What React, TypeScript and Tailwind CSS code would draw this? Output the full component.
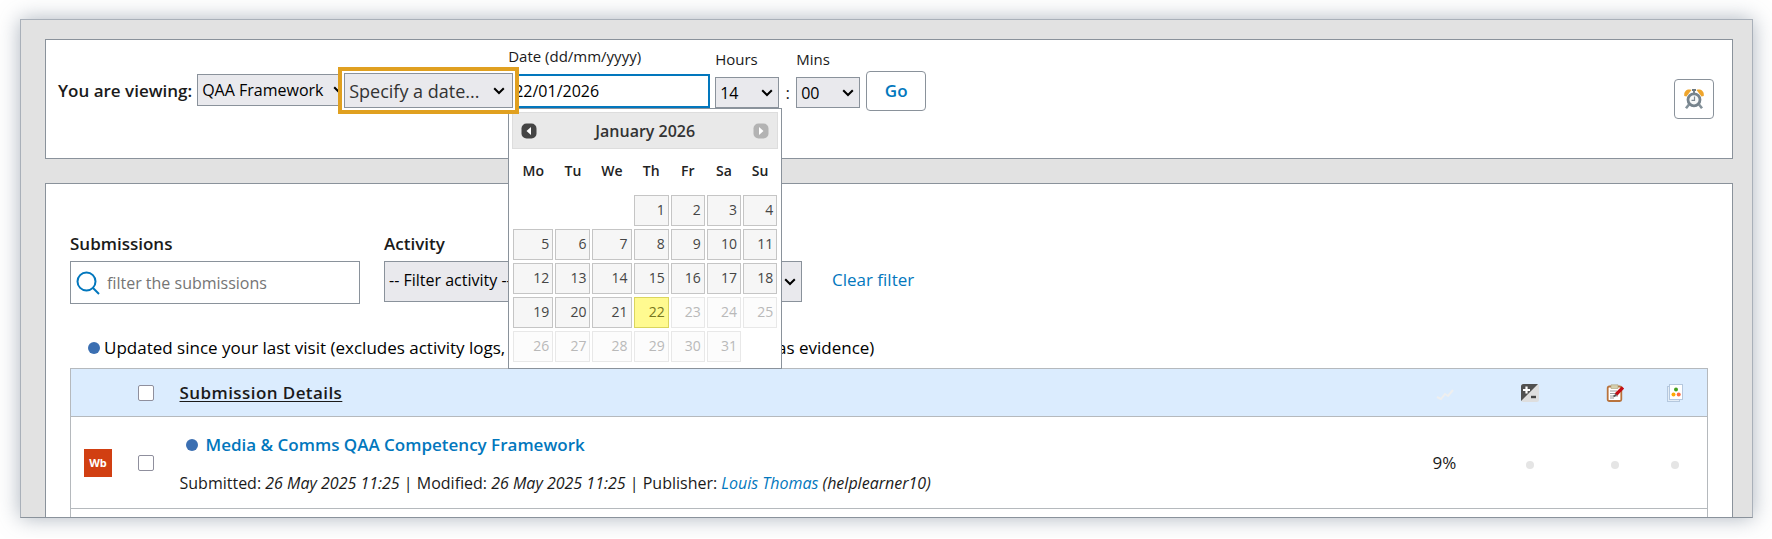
import { useState } from "react";
import type { ReactNode, SelectHTMLAttributes } from "react";

const days = ["Mo", "Tu", "We", "Th", "Fr", "Sa", "Su"];

const weeks = [
  [0, 0, 0, 1, 2, 3, 4],
  [5, 6, 7, 8, 9, 10, 11],
  [12, 13, 14, 15, 16, 17, 18],
  [19, 20, 21, 22, 23, 24, 25],
  [26, 27, 28, 29, 30, 31, 0],
];

const today = 22;

interface DropdownProps extends SelectHTMLAttributes<HTMLSelectElement> {
  wrapper?: string;
  chevron?: string;
  children: ReactNode;
}

function Dropdown({ wrapper = "", chevron = "right-1.5 w-3", className = "", children, ...rest }: DropdownProps) {
  return (
    <div className={`relative text-black ${wrapper}`}>
      <select
        className={`block w-full appearance-none border border-[#8a929b] bg-[#e9e9ed] pl-1 outline-none ${className}`}
        {...rest}
      >
        {children}
      </select>
      <svg
        viewBox="0 0 12 8"
        fill="none"
        stroke="currentColor"
        strokeWidth="2"
        className={`pointer-events-none absolute top-1/2 -translate-y-1/2 ${chevron}`}
      >
        <path d="M1.2 1.2 6 6l4.8-4.8" />
      </svg>
    </div>
  );
}

function ClockIcon() {
  return (
    <svg viewBox="0 0 20 20" className="h-5 w-5">
      <path d="M5 15.500 2 19.200M15 15.500 18 19.200" stroke="#84919a" strokeWidth="2.600" />
      <path d="M.3 7C-.5 2.500 3 -.5 7.500 1L2.500 7.500Z" fill="#efa52c" />
      <path d="M19.700 7C20.500 2.500 17 -.5 12.500 1L17.500 7.500Z" fill="#efa52c" />
      <path d="M8 1h4M10 1v3" stroke="#6c7982" strokeWidth="1.800" />
      <circle cx="10" cy="10.800" r="6" fill="#f7f8f8" stroke="#76838c" strokeWidth="2.800" />
      <path d="M10.500 7.500V11.300H7.500" stroke="#7d8991" strokeWidth="1.200" fill="none" />
    </svg>
  );
}

function Calendar() {
  return (
    <div className="absolute top-full left-0 z-20 w-[274px] border border-[#8a929b] bg-white px-[3px] pt-[3px] pb-[5px]">
      <div className="flex h-[37px] items-center justify-between border border-[#ddd] bg-[#e9e9e9] px-2 text-base text-[#333]">
        <button type="button" aria-label="Previous month">
          <svg viewBox="0 0 16 16" className="h-4 w-4">
            <rect x=".5" y=".5" width="15" height="15" rx="5" fill="#444" />
            <path d="M10 4v8L5.500 8Z" fill="#fff" />
          </svg>
        </button>
        <span className="font-semibold">January 2026</span>
        <button type="button" aria-label="Next month" disabled>
          <svg viewBox="0 0 16 16" className="h-4 w-4">
            <rect x=".5" y=".5" width="15" height="15" rx="5" fill="#b3b3b3" />
            <path d="M6 4v8L10.500 8Z" fill="#fff" />
          </svg>
        </button>
      </div>
      <table className="w-full table-fixed border-collapse text-sm">
        <colgroup>
          <col className="w-[42px]" />
          <col className="w-[37px]" />
          <col className="w-[41px]" />
          <col className="w-[37px]" />
          <col className="w-9" />
          <col className="w-9" />
          <col className="w-9" />
        </colgroup>
        <thead>
          <tr className="h-11">
            {days.map((day) => (
              <th key={day} className="p-0 font-semibold text-[#222]">
                {day}
              </th>
            ))}
          </tr>
        </thead>
        <tbody>
          {weeks.map((week, i) => (
            <tr key={i} className="h-[34px]">
              {week.map((day, j) => (
                <td key={j} className="px-px py-0">
                  {day > 0 && (
                    <button
                      type="button"
                      disabled={day > today}
                      className={`block h-[31px] w-full border pr-[3px] text-right ${
                        day === today
                          ? "border-[#dad55e] bg-[#fffa90] text-[#777620]"
                          : day > today
                            ? "border-[#e8e8e8] bg-[#fcfcfc] text-[#b9b9b9]"
                            : "border-[#c5c5c5] bg-[#f6f6f6] text-[#454545]"
                      }`}
                    >
                      {day}
                    </button>
                  )}
                </td>
              ))}
            </tr>
          ))}
        </tbody>
      </table>
    </div>
  );
}

function ViewingBar() {
  const [date, setDate] = useState("22/01/2026");

  return (
    <section className="flex items-end justify-between border border-[#8a929b] bg-white pt-1.5 pr-[18px] pb-[39px] pl-3">
      <div className="flex items-end pb-2">
        <label htmlFor="framework" className="mr-[5px] pb-2 font-semibold">
          You are viewing:
        </label>
        <Dropdown id="framework" wrapper="mb-[5px] w-[154px]" className="h-8 text-base">
          <option>QAA Framework</option>
        </Dropdown>
        <div className="relative z-30 -mb-[3px] -ml-[13px] w-[181px] border-4 border-[#e0a020] bg-white p-0.5">
          <Dropdown
            aria-label="Date range"
            className="h-[35px] text-lg text-[#333]"
            chevron="right-2 w-3"
          >
            <option>Specify a date...</option>
          </Dropdown>
        </div>
        <div className="relative -ml-[11px] pb-[3px]">
          <label htmlFor="date" className="mb-2 block text-[15px] leading-5">
            Date (dd/mm/yyyy)
          </label>
          <div className="relative">
            <input
              id="date"
              type="text"
              value={date}
              onChange={(e) => setDate(e.target.value)}
              className="block h-[34px] w-[202px] border-2 border-[#0277bd] px-1 text-base text-black outline-none"
            />
            <Calendar />
          </div>
        </div>
        <div className="ml-[5px] pb-[3px]">
          <label htmlFor="hours" className="mb-2 block text-[15px] leading-5">
            Hours
          </label>
          <Dropdown id="hours" wrapper="w-16" className="h-[31px] text-base">
            <option>14</option>
          </Dropdown>
        </div>
        <span className="w-[17px] pb-1.5 text-center">:</span>
        <div className="pb-[3px]">
          <label htmlFor="mins" className="mb-2 block text-[15px] leading-5">
            Mins
          </label>
          <Dropdown id="mins" wrapper="w-16" className="h-[31px] text-base">
            <option>00</option>
          </Dropdown>
        </div>
        <button
          type="button"
          className="ml-1.5 h-10 w-[60px] rounded border border-[#8a929b] font-semibold text-[#0277bd]"
        >
          Go
        </button>
      </div>
      <button
        type="button"
        aria-label="Reminders"
        className="flex h-10 w-10 items-center justify-center rounded border border-[#8a929b]"
      >
        <ClockIcon />
      </button>
    </section>
  );
}

function Filters() {
  return (
    <div className="flex items-start">
      <div className="w-[290px]">
        <label htmlFor="submissions" className="mb-[5px] block font-semibold">
          Submissions
        </label>
        <div className="relative">
          <svg
            viewBox="0 0 24 24"
            fill="none"
            stroke="#0277bd"
            strokeWidth="2"
            className="absolute top-2.5 left-1.5 h-6 w-6"
          >
            <circle cx="10.500" cy="10.500" r="9" />
            <path d="m17 17 6 6" />
          </svg>
          <input
            id="submissions"
            type="text"
            placeholder="filter the submissions"
            className="block h-[43px] w-full border border-[#8a929b] pl-9 text-base placeholder:text-[#757575] outline-none"
          />
        </div>
      </div>
      <div className="ml-6 w-[418px]">
        <label htmlFor="activity" className="mb-[5px] block font-semibold">
          Activity
        </label>
        <Dropdown id="activity" className="h-[41px] pb-1 text-base">
          <option>-- Filter activity --</option>
        </Dropdown>
      </div>
      <a href="#" className="ml-[30px] pt-9 text-[#0277bd]">
        Clear filter
      </a>
    </div>
  );
}

function GradeIcon() {
  return (
    <svg viewBox="0 0 18 18" className="mx-auto h-[18px] w-[18px]">
      <rect width="18" height="18" rx="2.500" fill="#dedede" />
      <path d="M2.500 0H17L0 17V2.500A2.500 2.500 0 0 1 2.500 0Z" fill="#505050" />
      <path d="M5.500 2.500v7M2 6h7" stroke="#fff" strokeWidth="2.200" />
      <path d="M10 13h5" stroke="#444" strokeWidth="2.400" />
    </svg>
  );
}

function FeedbackIcon() {
  return (
    <svg viewBox="0 0 18 18" className="mx-auto h-[18px] w-[18px]">
      <rect x="1.700" y="2.500" width="13.600" height="14.500" rx="1.500" fill="#fff" stroke="#b8733d" strokeWidth="1.800" />
      <path d="M5 .8h7v3.700H5Z" fill="#d5d0ae" stroke="#a79f78" strokeWidth=".6" />
      <path d="M4 7h7M4 9.500h6M4 12h8M4 14h4" stroke="#9a9a9a" strokeWidth="1" />
      <path d="m10 10.500 7-7" stroke="#c40d14" strokeWidth="3.200" />
      <path d="m7.500 12.500 3-2" stroke="#555" strokeWidth="1.600" />
    </svg>
  );
}

function CardsIcon() {
  return (
    <svg viewBox="0 0 18 18" className="mx-auto h-[18px] w-[18px]">
      <rect x="1.500" y="2.500" width="12" height="15" fill="#e4edf6" stroke="#b5c8de" />
      <rect x="3.500" y=".5" width="13" height="15" fill="#fff" stroke="#b5c8de" />
      <circle cx="10" cy="5.500" r="2" fill="#43a01f" />
      <circle cx="7.500" cy="10.500" r="2" fill="#ffa800" />
      <circle cx="12.700" cy="10.500" r="2" fill="#ff6c3f" />
    </svg>
  );
}

function Dot() {
  return <span className="inline-block h-3 w-3 rounded-full bg-[#3b6fb2]" />;
}

function EmptyDot() {
  return <span className="mx-auto mt-1 block h-2 w-2 rounded-full bg-[#e5e5e5]" />;
}

function SubmissionsTable() {
  return (
    <table className="w-full table-fixed border-collapse border-x border-[#b5b9bd]">
      <colgroup>
        <col className="w-[58px]" />
        <col className="w-[34px]" />
        <col />
        <col className="w-[58px]" />
        <col className="w-28" />
        <col className="w-[58px]" />
        <col className="w-16" />
      </colgroup>
      <thead>
        <tr className="h-12 border-y border-[#b5b9bd] bg-[#dbecfe]">
          <th />
          <th className="p-0">
            <input
              type="checkbox"
              aria-label="Select all"
              className="mx-auto block h-4 w-4 appearance-none rounded-xs border border-[#8f8f9d] bg-white"
            />
          </th>
          <th className="py-0 pr-0 pl-[17px] text-left font-semibold tracking-wide">
            <a href="#" className="underline underline-offset-2">
              Submission Details
            </a>
          </th>
          <th className="p-0">
            <svg viewBox="0 0 18 12" fill="none" stroke="#efefef" strokeWidth="2" className="mx-auto mt-1 h-3 w-[18px]">
              <path d="m1 8 4 2 4-5 3 2 5-6" />
            </svg>
          </th>
          <th className="p-0">
            <GradeIcon />
          </th>
          <th className="p-0">
            <FeedbackIcon />
          </th>
          <th className="p-0">
            <CardsIcon />
          </th>
        </tr>
      </thead>
      <tbody>
        <tr className="h-[92px] border-b border-[#b5b9bd]">
          <td className="py-0 pr-0 pl-[13px]">
            <div className="flex h-7 w-7 items-center justify-center bg-[#d13f12] text-[11px] font-bold text-white">
              Wb
            </div>
          </td>
          <td className="p-0">
            <input
              type="checkbox"
              aria-label="Select Media & Comms QAA Competency Framework"
              className="mx-auto block h-4 w-4 appearance-none rounded-xs border border-[#8f8f9d] bg-white"
            />
          </td>
          <td className="pt-0.5 pr-0 pb-0 pl-[17px]">
            <div className="mb-3.5 flex items-center gap-2 pl-1.5">
              <Dot />
              <a href="#" className="font-semibold text-[#0277bd]">
                Media &amp; Comms QAA Competency Framework
              </a>
            </div>
            <p className="text-base leading-6">
              Submitted: <em>26 May 2025 11:25</em> | Modified: <em>26 May 2025 11:25</em> | Publisher:{" "}
              <em>
                <a href="#" className="text-[#0277bd]">
                  Louis Thomas
                </a>{" "}
                (helplearner10)
              </em>
            </p>
          </td>
          <td className="p-0 text-center">9%</td>
          <td className="p-0">
            <EmptyDot />
          </td>
          <td className="p-0">
            <EmptyDot />
          </td>
          <td className="p-0">
            <EmptyDot />
          </td>
        </tr>
        <tr className="h-2">
          <td colSpan={7} className="p-0" />
        </tr>
      </tbody>
    </table>
  );
}

export default function App() {
  return (
    <div className="bg-white pt-[19px] pr-[19px] pb-5 pl-5 font-['Open_Sans','Noto_Sans',sans-serif] text-[17px] leading-6 text-[#1a1a1a]">
      <main className="border border-[#a9b0b9] border-b-[#8a929b] bg-[#e2e2e2] pt-[19px] pr-[19px] pl-6 shadow-[0_0_20px_rgba(90,105,125,0.5)]">
        <ViewingBar />
        <section className="mt-6 border border-b-0 border-[#8a929b] bg-white px-6 pt-12">
          <Filters />
          <p className="mt-8 mb-2 flex items-center gap-1 pl-[18px] text-black">
            <Dot />
            Updated since your last visit (excludes activity logs, comments plus files or links used as evidence)
          </p>
          <SubmissionsTable />
        </section>
      </main>
    </div>
  );
}
